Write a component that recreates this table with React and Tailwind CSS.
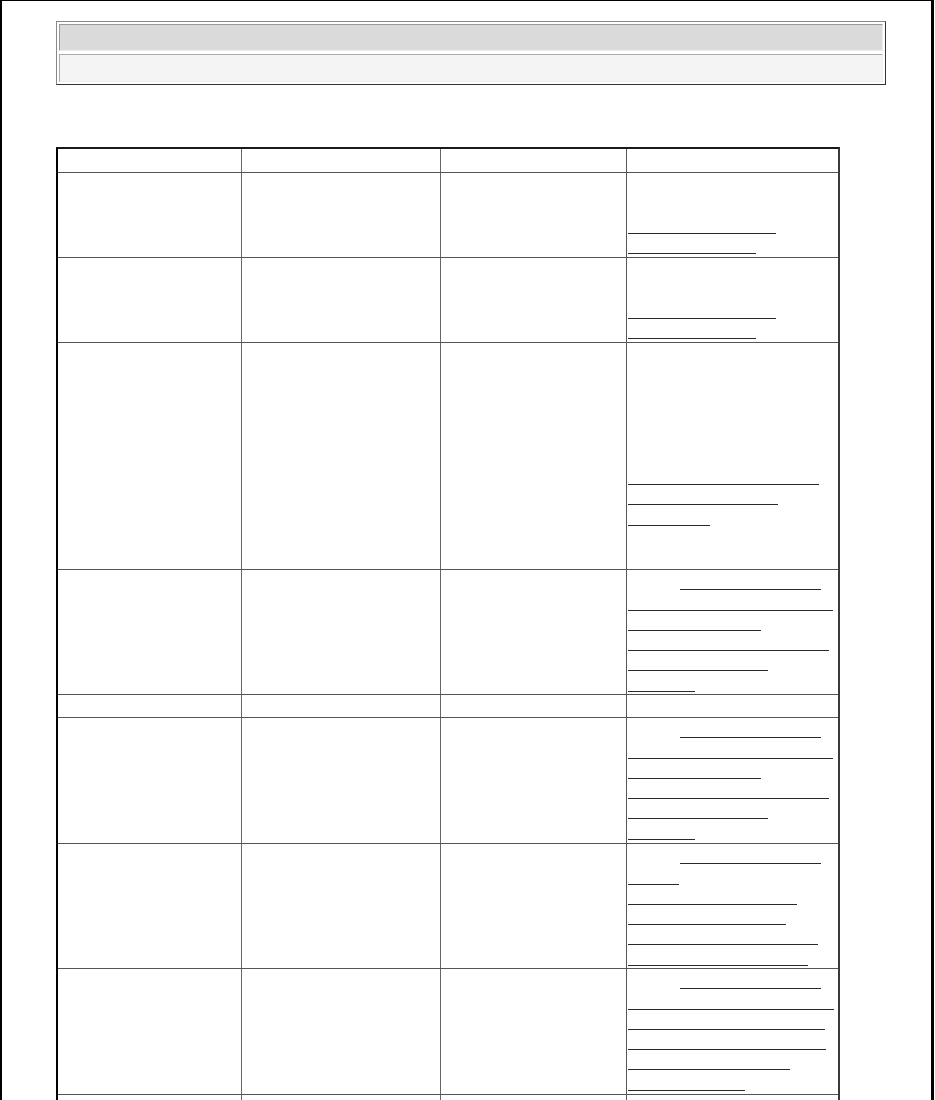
import React from "react";

const rows = [
  { h: "h-[85px]", lines: [null, null, [628, 776], [628, 756]] },
  { h: "h-[85px]", lines: [null, null, [628, 776], [628, 756]] },
  {
    h: "h-[227px]",
    lines: [null, null, null, null, null, null, [628, 819], [628, 778], [628, 710]],
  },
  {
    h: "h-[125px]",
    lines: [[680, 821], [628, 833], [628, 761], [628, 829], [628, 768], [628, 695]],
  },
  { h: "h-[23px]", lines: [] },
  {
    h: "h-[126px]",
    lines: [[680, 821], [628, 833], [628, 761], [628, 829], [628, 768], [628, 695]],
  },
  {
    h: "h-[125px]",
    lines: [[680, 821], [628, 679], [628, 797], [628, 786], [628, 818], [628, 808]],
  },
  {
    h: "h-[126px]",
    lines: [[680, 821], [628, 834], [628, 825], [628, 826], [628, 790], [628, 745]],
  },
  { h: "h-[125px]", lines: [] },
];

function Underlines({ lines }) {
  return (
    <div className="flex flex-col">
      {lines.map((l, i) => (
        <div key={i} className="h-[20.3px] flex items-end">
          {l ? (
            <div
              className="h-px bg-[#2a2a2a]"
              style={{ marginLeft: l[0] - 627, width: l[1] - l[0] }}
            />
          ) : null}
        </div>
      ))}
    </div>
  );
}

function Row({ h, lines, first }) {
  return (
    <div
      className={`grid grid-cols-[183px_199px_186px_212px] ${h} ${
        first ? "" : "border-t border-[#555]"
      }`}
    >
      <div />
      <div className="border-l border-[#666]" />
      <div className="border-l border-[#666]" />
      <div className="border-l border-[#555]">
        {lines && lines.length ? <Underlines lines={lines} /> : null}
      </div>
    </div>
  );
}

export default function App() {
  return (
    <div
      className="w-[935px] h-[1100px] overflow-hidden bg-white"
      style={{ fontFamily: '"Liberation Sans", Arial, sans-serif' }}
    >
      <div className="w-[934px] min-h-[1100px] border-l-2 border-t border-r-[3px] border-black">
        {/* header box */}
        <div className="ml-[54px] mt-[20px] w-[830px] h-[64px] border border-t-[#888] border-l-[#888] border-b-[#333] border-r-[#333] p-[2px] flex flex-col gap-[3px]">
          <div className="h-[27px] bg-[#dadada] border border-t-[#999] border-l-[#999] border-b-[#eee] border-r-[#eee]" />
          <div className="h-[28px] bg-[#f4f4f4] border border-t-[#aaa] border-l-[#aaa] border-b-[#eee] border-r-[#eee]" />
        </div>

        {/* table */}
        <div className="ml-[54px] mt-[62px] w-[784px] border-l-2 border-t-2 border-r-2 border-l-black border-t-[#1a1a1a] border-r-[#3a3a3a]">
          <Row h="h-[23px]" lines={[]} first />
          {rows.map((r, i) => (
            <Row key={i} h={r.h} lines={r.lines} />
          ))}
        </div>
      </div>
    </div>
  );
}
